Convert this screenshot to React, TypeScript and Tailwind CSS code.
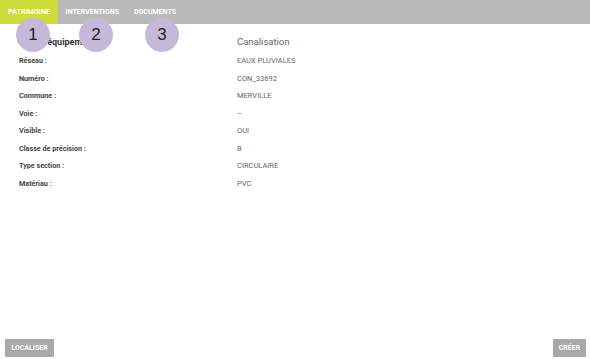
import React from 'react'

const rows: [string, string][] = [
  ['Réseau :', 'EAUX PLUVIALES'],
  ['Numéro :', 'CON_33692'],
  ['Commune :', 'MERVILLE'],
  ['Voie :', '–'],
  ['Visible :', 'OUI'],
  ['Classe de précision :', 'B'],
  ['Type section :', 'CIRCULAIRE'],
  ['Matériau :', 'PVC'],
]

const tabs = ['PATRIMOINE', 'INTERVENTIONS', 'DOCUMENTS']

const Bubble = ({ n, left }: { n: number; left: string }) => (
  <div
    className={`absolute top-[18px] ${left} w-[34px] h-[34px] rounded-full bg-[#c6b8d9] flex items-center justify-center text-[17px] text-[#222] font-['Liberation_Sans',sans-serif]`}
  >
    {n}
  </div>
)

export default function App() {
  return (
    <div className="relative h-screen w-full flex flex-col bg-white font-['Roboto',sans-serif]">
      <div className="flex h-[24px] bg-[#bababa] shrink-0">
        {tabs.map((t, i) => (
          <div
            key={t}
            className={
              i === 0
                ? 'flex items-center px-[8px] bg-[#cddc39] text-white text-[7.2px] font-bold'
                : 'flex items-center px-[7.5px] text-white text-[7px] font-bold'
            }
          >
            {t}
          </div>
        ))}
      </div>

      <div className="flex-1 pt-[12px] pl-[19px]">
        <div className="flex items-center h-[13px] mb-[3px]">
          <div className="w-[218px] text-[9px] font-bold text-[#333]">Type d'équipement</div>
          <div className="text-[9.5px] text-[#666]">Canalisation</div>
        </div>
        {rows.map(([k, v]) => (
          <div key={k} className="flex items-baseline h-[17.5px] pt-[4px] leading-[9px]">
            <div className="w-[218px] text-[7.2px] font-bold text-[#444]">{k}</div>
            <div className="text-[7.5px] text-[#666]">{v}</div>
          </div>
        ))}
      </div>

      <div className="flex justify-between items-end px-[5px] pb-[2px] shrink-0">
        <button className="h-[18px] w-[49px] bg-[#a8a8a8] text-white text-[7px] font-bold">
          LOCALISER
        </button>
        <button className="h-[18px] w-[33px] mr-[-1px] bg-[#a8a8a8] text-white text-[7px] font-bold">
          CRÉER
        </button>
      </div>

      <Bubble n={1} left="left-[16px]" />
      <Bubble n={2} left="left-[79px]" />
      <Bubble n={3} left="left-[145px]" />
    </div>
  )
}
